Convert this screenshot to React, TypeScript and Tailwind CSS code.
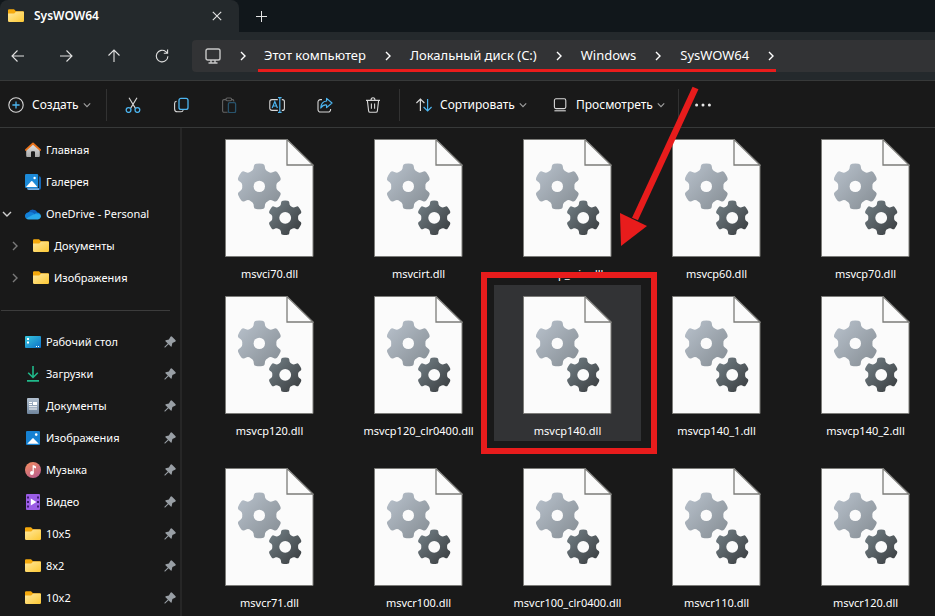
import React from 'react';

type IconComponent = () => React.ReactElement;

interface SidebarItem {
  label: string;
  icon: IconComponent;
  expander?: 'open' | 'closed';
  nested?: boolean;
}

const files = [
  'msvci70.dll',
  'msvcirt.dll',
  'msvcp_win.dll',
  'msvcp60.dll',
  'msvcp70.dll',
  'msvcp120.dll',
  'msvcp120_clr0400.dll',
  'msvcp140.dll',
  'msvcp140_1.dll',
  'msvcp140_2.dll',
  'msvcr71.dll',
  'msvcr100.dll',
  'msvcr100_clr0400.dll',
  'msvcr110.dll',
  'msvcr120.dll',
];

const SELECTED_FILE = 'msvcp140.dll';

const crumbs = ['Этот компьютер', 'Локальный диск (C:)', 'Windows', 'SysWOW64'];

const homeItems: SidebarItem[] = [
  { label: 'Главная', icon: HomeIcon },
  { label: 'Галерея', icon: GalleryIcon },
  { label: 'OneDrive - Personal', icon: OneDriveIcon, expander: 'open' },
  { label: 'Документы', icon: FolderIcon, expander: 'closed', nested: true },
  { label: 'Изображения', icon: FolderIcon, expander: 'closed', nested: true },
];

const pinnedItems: SidebarItem[] = [
  { label: 'Рабочий стол', icon: DesktopIcon },
  { label: 'Загрузки', icon: DownloadsIcon },
  { label: 'Документы', icon: DocumentIcon },
  { label: 'Изображения', icon: PicturesIcon },
  { label: 'Музыка', icon: MusicIcon },
  { label: 'Видео', icon: VideoIcon },
  { label: '10x5', icon: FolderIcon },
  { label: '8x2', icon: FolderIcon },
  { label: '10x2', icon: FolderIcon },
];

// Icons

function FolderIcon() {
  return (
    <svg className="w-4 h-4" viewBox="0 0 16 16">
      <defs>
        <linearGradient id="folder" x1="0" y1="0" x2="1" y2="1">
          <stop offset="0" stopColor="#ffe9a0" />
          <stop offset="1" stopColor="#fdc833" />
        </linearGradient>
      </defs>
      <path d="M0 2.3A1.1 1.1 0 0 1 1.1 1.2H6L8 3.2H14.8A1.2 1.2 0 0 1 16 4.4V8H0Z" fill="#f5a90c" />
      <path d="M0 5.4H6.2L8.2 3.6H15A1 1 0 0 1 16 4.6V12.8A1.2 1.2 0 0 1 14.8 14H1.2A1.2 1.2 0 0 1 0 12.8Z" fill="url(#folder)" />
    </svg>
  );
}

function HomeIcon() {
  return (
    <svg className="w-4 h-4" viewBox="0 0 16 16">
      <defs>
        <linearGradient id="home" x1="0" y1="0" x2="0" y2="1">
          <stop offset="0" stopColor="#e4e4e4" />
          <stop offset="1" stopColor="#a8a8a8" />
        </linearGradient>
      </defs>
      <path d="M1.2 7.5L8 1.6L14.8 7.5V14A1 1 0 0 1 13.8 15H10V10.2A1 1 0 0 0 9 9.2H7A1 1 0 0 0 6 10.2V15H2.2A1 1 0 0 1 1.2 14Z" fill="url(#home)" />
      <path d="M0.9 7.9L8 1.5L15.1 7.9" fill="none" stroke="#e8711a" strokeWidth="1.9" strokeLinecap="round" strokeLinejoin="round" />
    </svg>
  );
}

function GalleryIcon() {
  return (
    <svg className="w-4 h-4" viewBox="0 0 16 16">
      <path d="M14 2.2A2 2 0 0 1 16 4V13.5A2.5 2.5 0 0 1 13.5 16H4A2 2 0 0 1 2 14.3H14Z" fill="#1566b4" />
      <path d="M2 14.2H14V16H4A2 2 0 0 1 2 14.2Z" fill="#70aee4" />
      <rect width="13.2" height="14" rx="1.2" fill="#1c8ad8" />
      <path d="M1 13L6.2 7.2Q6.8 6.6 7.4 7.2L12.4 13Z" fill="#fff" />
      <circle cx="9.6" cy="4" r="1.2" fill="#fff" />
    </svg>
  );
}

function OneDriveIcon() {
  return (
    <svg className="w-4 h-4" viewBox="0 0 16 16">
      <path d="M3.4 6.4A4.9 4.9 0 0 1 12.4 6.8L8 10L2 9Z" fill="#0f5fb8" />
      <path d="M3.4 6.2A3.7 3.7 0 0 0 1 12.4L10.2 8.2Q6.8 5.4 3.4 6.2Z" fill="#1380d8" />
      <path d="M9.4 8.2A4.3 4.3 0 0 1 12.4 6.6A3.6 3.6 0 0 1 15.4 8.4L11 10Z" fill="#1489dc" />
      <path d="M1 12.2L8.4 8.6Q10.2 7.7 12.4 8.2L15.2 8.3A3.1 3.1 0 0 1 13 13.4H3.8A3.7 3.7 0 0 1 1 12.2Z" fill="#29a8ea" />
    </svg>
  );
}

function DesktopIcon() {
  return (
    <svg className="w-4 h-4" viewBox="0 0 16 16">
      <defs>
        <linearGradient id="desktop" x1="0" y1="0" x2="1" y2="1">
          <stop offset="0" stopColor="#38c8de" />
          <stop offset="1" stopColor="#0c6fc8" />
        </linearGradient>
      </defs>
      <rect y="2" width="16" height="12" rx="1" fill="url(#desktop)" />
      <path d="M2 4H4V6H2ZM2 7.5H4V9.5H2ZM11 12H12V13H11ZM13 12H14V13H13Z" fill="#fff" />
    </svg>
  );
}

function DownloadsIcon() {
  return (
    <svg className="w-4 h-4" viewBox="0 0 16 16" fill="none" stroke="#20b98a" strokeWidth="1.6">
      <path d="M8 0V11.4M3.2 6.8L8 11.5L12.8 6.8M2 14.9H14" />
    </svg>
  );
}

function DocumentIcon() {
  return (
    <svg className="w-4 h-4" viewBox="0 0 16 16">
      <defs>
        <linearGradient id="document" x1="0" y1="0" x2="0" y2="1">
          <stop offset="0" stopColor="#b3c1d0" />
          <stop offset="1" stopColor="#6f859d" />
        </linearGradient>
      </defs>
      <rect x="2" width="12" height="16" rx="1" fill="url(#document)" />
      <path d="M4 4.5H7M4 6.5H7M4 8.8H12M4 11H12" stroke="#fff" strokeWidth="1.1" />
      <rect x="8" y="4" width="4" height="3" fill="#fff" />
    </svg>
  );
}

function PicturesIcon() {
  return (
    <svg className="w-4 h-4" viewBox="0 0 16 16">
      <rect x="1" y="1" width="14" height="14" rx="1" fill="#1681d2" />
      <path d="M2.2 13.8L7.4 8.4Q8 7.8 8.6 8.4L13.8 13.8Z" fill="#fff" />
      <circle cx="11.2" cy="4.6" r="1.3" fill="#fff" />
    </svg>
  );
}

function MusicIcon() {
  return (
    <svg className="w-4 h-4" viewBox="0 0 16 16">
      <defs>
        <linearGradient id="music" x1="0.2" y1="0" x2="0.8" y2="1">
          <stop offset="0" stopColor="#f08a62" />
          <stop offset="1" stopColor="#b85c8e" />
        </linearGradient>
      </defs>
      <circle cx="8" cy="8" r="8" fill="url(#music)" />
      <circle cx="6.9" cy="11" r="1.9" fill="#fff" />
      <path d="M7.6 3.2H8.8L11 4.6V6.6L8.8 5.6V11H7.6Z" fill="#fff" />
    </svg>
  );
}

function VideoIcon() {
  return (
    <svg className="w-4 h-4" viewBox="0 0 16 16">
      <rect x="1" width="14" height="16" rx="1" fill="#9b5de5" />
      <path d="M2 2.5H4V4.5H2ZM2 7H4V9H2ZM2 11.5H4V13.5H2ZM12 2.5H14V4.5H12ZM12 7H14V9H12ZM12 11.5H14V13.5H12Z" fill="#3f1d70" />
      <path d="M5.8 4.6L11.4 8L5.8 11.4Z" fill="#fff" />
    </svg>
  );
}

function PinIcon() {
  return (
    <svg className="w-3 h-3" viewBox="1.5 1.5 13 13" fill="#999fa5">
      <path d="M10.3 2.2a1.2 1.2 0 0 0-1.9.3L6.8 5.4L3.4 6.2a.5.5 0 0 0-.3.9L5.6 9.6L2 13.2V14H2.8L6.4 10.4L8.9 12.9a.5.5 0 0 0 .9-.3L10.6 9.2L13.5 7.6a1.2 1.2 0 0 0 .3-1.9Z" />
    </svg>
  );
}

function Chevron({ className, d }: { className: string; d: string }) {
  return (
    <svg className={className} viewBox="0 0 10 10" fill="none" stroke="currentColor" strokeWidth="1.4">
      <path d={d} />
    </svg>
  );
}

const CHEVRON_RIGHT = 'M3 1L7 5L3 9';
const CHEVRON_DOWN = 'M1 3L5 7L9 3';

// Outline of a six-toothed gear centred on (cx, cy)
function gearPath(cx: number, cy: number, r: number) {
  const point = (radius: number, degrees: number) => {
    const a = ((degrees - 90) * Math.PI) / 180;
    return `${(cx + radius * r * Math.cos(a)).toFixed(2)} ${(cy + radius * r * Math.sin(a)).toFixed(2)}`;
  };
  let d = `M${point(0.94, -14.5)}`;
  for (let i = 0; i < 6; i++) {
    const t = i * 60;
    d += `L${point(0.94, t - 14.5)}Q${point(1.0, t - 13)} ${point(1.0, t - 8)}Q${point(1.01, t)} ${point(1.0, t + 8)}`;
    d += `Q${point(1.0, t + 13)} ${point(0.94, t + 14.5)}L${point(0.82, t + 18)}`;
    d += `Q${point(0.74, t + 22)} ${point(0.75, t + 30)}Q${point(0.74, t + 38)} ${point(0.82, t + 42)}`;
  }
  return `${d}Z`;
}

function DllIcon() {
  return (
    <svg className="w-[89px] h-[118px] shrink-0" viewBox="0 0 89 118">
      <defs>
        <linearGradient id="gear-light" x1="0" y1="0" x2="1" y2="1">
          <stop offset="0.1" stopColor="#b4bdc7" />
          <stop offset="0.9" stopColor="#8a9299" />
        </linearGradient>
        <linearGradient id="gear-dark" x1="0" y1="0" x2="1" y2="1">
          <stop offset="0.1" stopColor="#6f7b81" />
          <stop offset="0.9" stopColor="#3d4144" />
        </linearGradient>
      </defs>
      <path d="M0.5 0.5H62L88 26V117.5H0.5Z" fill="#fbfbfb" stroke="#7c7c79" />
      <path d="M62 0.5V26H88Z" fill="#fbfbfb" stroke="#7c7c79" strokeWidth="1.3" />
      <path d={gearPath(34.3, 47.4, 22.8)} fill="url(#gear-light)" />
      <circle cx="34.3" cy="47.4" r="5.7" fill="#fbfbfb" />
      <path d={gearPath(60.2, 78.8, 17.2)} fill="url(#gear-dark)" />
      <circle cx="60.2" cy="78.8" r="5.9" fill="#fbfbfb" />
    </svg>
  );
}

// Window chrome

function TitleBar() {
  return (
    <header className="h-8 flex bg-[#11171b]">
      <div className="w-[239px] shrink-0 flex items-center rounded-t-lg bg-[#24292c] pl-2 pr-4">
        <FolderIcon />
        <span className="ml-2.5 flex-1 text-[12px] font-semibold">SysWOW64</span>
        <button aria-label="Закрыть вкладку" className="w-3 h-4 flex items-center justify-center">
          <svg className="w-2.5 h-2.5" viewBox="0 0 10 10" stroke="#e4e4e4" strokeWidth="1.1">
            <path d="M0.8 0.8L9.2 9.2M9.2 0.8L0.8 9.2" />
          </svg>
        </button>
      </div>
      <button aria-label="Новая вкладка" className="w-11 flex items-center justify-center">
        <svg className="w-3 h-3" viewBox="0 0 12 12" stroke="#e4e4e4">
          <path d="M6.5 1V12M1 6.5H12" />
        </svg>
      </button>
    </header>
  );
}

const navButtons = [
  { label: 'Назад', d: 'M14 8H2M7.5 2.5L2 8L7.5 13.5' },
  { label: 'Вперёд', d: 'M2 8H14M8.5 2.5L14 8L8.5 13.5' },
  { label: 'Вверх', d: 'M8 14V2M2.5 7.5L8 2L13.5 7.5' },
  { label: 'Обновить', d: 'M13.9 8.2A5.8 5.8 0 1 1 11.8 3.6L13.4 5M13.6 1.6V5.2H9.8' },
];

function NavigationBar() {
  return (
    <div className="h-12 flex items-center bg-[#24292c]">
      <div className="w-48 shrink-0 flex gap-2 -ml-0.5">
        {navButtons.map((button) => (
          <button key={button.label} aria-label={button.label} className="w-10 h-8 flex items-center justify-center">
            <svg className="w-4 h-4" viewBox="0 0 16 16" fill="none" stroke="#e2e2e2" strokeWidth="1.1">
              <path d={button.d} />
            </svg>
          </button>
        ))}
      </div>
      <div className="flex-1 h-8 ml-0.5 flex items-center rounded-l bg-[#323335]">
        <svg className="w-4 h-4 ml-[13px] shrink-0" viewBox="0 0 16 16" fill="none" stroke="#c8c8c8" strokeWidth="1.4">
          <rect x="1" y="1" width="14" height="11" rx="1.8" />
          <path d="M6 12V14.6M10 12V14.6M3.5 15H12.5" />
        </svg>
        <Chevron className="w-2.5 h-2.5 ml-[17px] mr-2.5 shrink-0" d={CHEVRON_RIGHT} />
        <nav className="h-8 pl-1.5 pt-0.5 flex items-center border-b-3 border-[#e81c1c]">
          {crumbs.map((crumb, index) => (
            <React.Fragment key={crumb}>
              <a href="#" className="text-[13px] whitespace-nowrap">{crumb}</a>
              <Chevron
                className={index === crumbs.length - 1 ? 'w-2.5 h-2.5 ml-[17px]' : 'w-2.5 h-2.5 mx-[17px]'}
                d={CHEVRON_RIGHT}
              />
            </React.Fragment>
          ))}
        </nav>
      </div>
    </div>
  );
}

const actions = [
  {
    label: 'Вырезать',
    icon: (
      <>
        <path d="M4 0.8L10.6 11.6M12 0.8L5.4 11.6" stroke="#d8d8d8" />
        <circle cx="3.6" cy="13" r="2.4" stroke="#4cb5f0" strokeWidth="1.3" />
        <circle cx="12.4" cy="13" r="2.4" stroke="#4cb5f0" strokeWidth="1.3" />
      </>
    ),
  },
  {
    label: 'Копировать',
    icon: (
      <>
        <path d="M3.6 4.2A2.2 2.2 0 0 0 1.6 6.4V12A2.8 2.8 0 0 0 4.4 14.8H8A2.2 2.2 0 0 0 10.2 13.2" stroke="#d8d8d8" />
        <rect x="6" y="1.4" width="9" height="11" rx="2" stroke="#4cb5f0" strokeWidth="1.3" />
      </>
    ),
  },
  {
    label: 'Вставить',
    icon: (
      <>
        <path d="M5 2.6H3A1.4 1.4 0 0 0 1.6 4V13.8A1.4 1.4 0 0 0 3 15.2H6.6M10.4 2.6H11.4A1.4 1.4 0 0 1 12.8 4V4.6" stroke="#636363" />
        <rect x="5" y="1" width="5.6" height="2.8" rx="1.2" stroke="#636363" />
        <rect x="7.4" y="5.6" width="7.2" height="10" rx="1.3" stroke="#28536c" strokeWidth="1.3" />
      </>
    ),
  },
  {
    label: 'Переименовать',
    icon: (
      <>
        <path d="M8.8 2.6H3A2.2 2.2 0 0 0 0.8 4.8V11.2A2.2 2.2 0 0 0 3 13.4H8.8M12.8 2.6H13.4A2 2 0 0 1 15.4 4.6V11.4A2 2 0 0 1 13.4 13.4H12.8" stroke="#d8d8d8" />
        <path d="M3.2 11L5.8 4.6L8.4 11M4.2 9H7.4M9 0.6H12.6M10.8 0.6V15.4M9 15.4H12.6" stroke="#4cb5f0" strokeWidth="1.2" />
      </>
    ),
  },
  {
    label: 'Поделиться',
    icon: (
      <>
        <path d="M5 2.6H3.4A2.4 2.4 0 0 0 1 5V12.6A2.4 2.4 0 0 0 3.4 15H11.2A2.4 2.4 0 0 0 13.6 12.6V12" stroke="#d8d8d8" />
        <path d="M9.6 1.4L15 6L9.6 10.6V8Q6 7.6 3.8 11Q4 4.6 9.6 4Z" stroke="#4cb5f0" strokeWidth="1.2" strokeLinejoin="round" />
      </>
    ),
  },
  {
    label: 'Удалить',
    icon: (
      <path d="M1 3.4H15M6 3.2Q6 0.8 8 0.8Q10 0.8 10 3.2M2.4 3.6L3.6 13.8Q3.8 15.2 5 15.2H11Q12.2 15.2 12.4 13.8L13.6 3.6M6.4 6.6V11.8M9.6 6.6V11.8" stroke="#d8d8d8" />
    ),
  },
];

function Divider() {
  return <span className="w-px h-8 shrink-0 bg-[#323232]" />;
}

function CommandBar() {
  return (
    <div className="h-12 pt-0.5 flex items-center border-y border-[#373939] text-[12px]">
      <button className="w-[106px] pl-2 shrink-0 flex items-center">
        <svg className="w-4 h-4" viewBox="0 0 16 16" fill="none" strokeWidth="1.1">
          <circle cx="8" cy="8" r="7.2" stroke="#d8d8d8" />
          <path d="M8 4.4V11.6M4.4 8H11.6" stroke="#4cb5f0" strokeWidth="1.3" />
        </svg>
        <span className="ml-2">Создать</span>
        <Chevron className="w-2 h-2 ml-1 text-[#a0a0a0]" d={CHEVRON_DOWN} />
      </button>
      <Divider />
      <div className="w-[292px] pl-1.5 shrink-0 flex gap-2">
        {actions.map((action) => (
          <button key={action.label} aria-label={action.label} className="w-10 h-8 flex items-center justify-center">
            <svg className="w-4 h-4" viewBox="0 0 16 16" fill="none" strokeWidth="1.1">
              {action.icon}
            </svg>
          </button>
        ))}
      </div>
      <Divider />
      <button className="w-[138px] pl-4 shrink-0 flex items-center">
        <svg className="w-4 h-4" viewBox="0 0 16 16" fill="none" strokeWidth="1.2">
          <path d="M4.4 14V2M0.4 6L4.4 2L8.4 6" stroke="#d8d8d8" />
          <path d="M11.6 2V14M7.6 10L11.6 14L15.6 10" stroke="#4cb5f0" />
        </svg>
        <span className="ml-2">Сортировать</span>
        <Chevron className="w-2 h-2 ml-1 text-[#a0a0a0]" d={CHEVRON_DOWN} />
      </button>
      <button className="w-[140px] pl-3.5 shrink-0 flex items-center">
        <svg className="w-4 h-4" viewBox="0 0 16 16" fill="none" stroke="#d8d8d8" strokeWidth="1.1">
          <rect x="2.4" y="1.8" width="11.4" height="9.8" rx="1.6" />
          <path d="M2.4 13.8H13.8" />
        </svg>
        <span className="ml-2">Просмотреть</span>
        <Chevron className="w-2 h-2 ml-1 text-[#a0a0a0]" d={CHEVRON_DOWN} />
      </button>
      <Divider />
      <button aria-label="Дополнительно" className="w-12 h-8 flex items-center justify-center">
        <svg className="w-4 h-4" viewBox="0 0 16 16" fill="#e8e8e8">
          <circle cx="1.6" cy="8" r="1.5" />
          <circle cx="8" cy="8" r="1.5" />
          <circle cx="14.4" cy="8" r="1.5" />
        </svg>
      </button>
    </div>
  );
}

function SidebarRow({ item, pinned = false }: { item: SidebarItem; pinned?: boolean }) {
  const Icon = item.icon;
  return (
    <li>
      <a href="#" className={item.nested ? 'h-8 flex items-center pl-2 pr-1' : 'h-8 flex items-center pr-1'}>
        <span className="w-[25px] pl-0.5 shrink-0">
          {item.expander === 'open' && <Chevron className="w-2.5 h-2.5 text-[#cfcfcf]" d={CHEVRON_DOWN} />}
          {item.expander === 'closed' && <Chevron className="w-2.5 h-2.5 text-[#7a7a7a]" d={CHEVRON_RIGHT} />}
        </span>
        <Icon />
        <span className="ml-[5px] flex-1 whitespace-nowrap">{item.label}</span>
        {pinned && <PinIcon />}
      </a>
    </li>
  );
}

function Sidebar() {
  return (
    <aside className="w-[182px] shrink-0 overflow-hidden border-r-2 border-[#262626] pt-1.5 text-[11px]">
      <ul>
        {homeItems.map((item) => (
          <SidebarRow key={item.label} item={item} />
        ))}
      </ul>
      <hr className="mt-4 mb-[15px] ml-px mr-2.5 border-[#3c3c3c]" />
      <ul>
        {pinnedItems.map((item) => (
          <SidebarRow key={item.label} item={item} pinned />
        ))}
      </ul>
    </aside>
  );
}

function FileTile({ name }: { name: string }) {
  const selected = name === SELECTED_FILE;
  return (
    <div
      className={
        selected
          ? 'relative h-[156px] flex flex-col items-center pt-[11px] bg-[#323335]'
          : 'h-[156px] flex flex-col items-center pt-[11px]'
      }
    >
      <DllIcon />
      <span className="mt-2 text-[11px] leading-[18px] whitespace-nowrap">{name}</span>
      {selected && (
        <span className="absolute -top-[13px] -bottom-[13px] -left-[13px] -right-4 border-6 border-[#e81c1c]" />
      )}
    </div>
  );
}

function Arrow() {
  return (
    <svg className="absolute left-[616px] top-[84px] w-[86px] h-[164px] pointer-events-none" viewBox="616 84 86 164">
      <path d="M695.5 88L635 219" stroke="#e81c1c" strokeWidth="6.5" />
      <path d="M620 213L647 226L621 246Z" fill="#e81c1c" />
    </svg>
  );
}

export default function App() {
  return (
    <div className="relative h-screen flex flex-col overflow-hidden bg-[#191919] text-white font-['Noto_Sans','Open_Sans',sans-serif]">
      <TitleBar />
      <NavigationBar />
      <CommandBar />
      <div className="flex-1 min-h-0 flex">
        <Sidebar />
        <main className="flex-1 min-w-0 pl-3.5">
          <div className="grid grid-cols-[repeat(5,147px)] grid-rows-[156px_171px_156px] gap-x-0.5 gap-y-px">
            {files.map((name) => (
              <FileTile key={name} name={name} />
            ))}
          </div>
        </main>
      </div>
      <Arrow />
    </div>
  );
}
